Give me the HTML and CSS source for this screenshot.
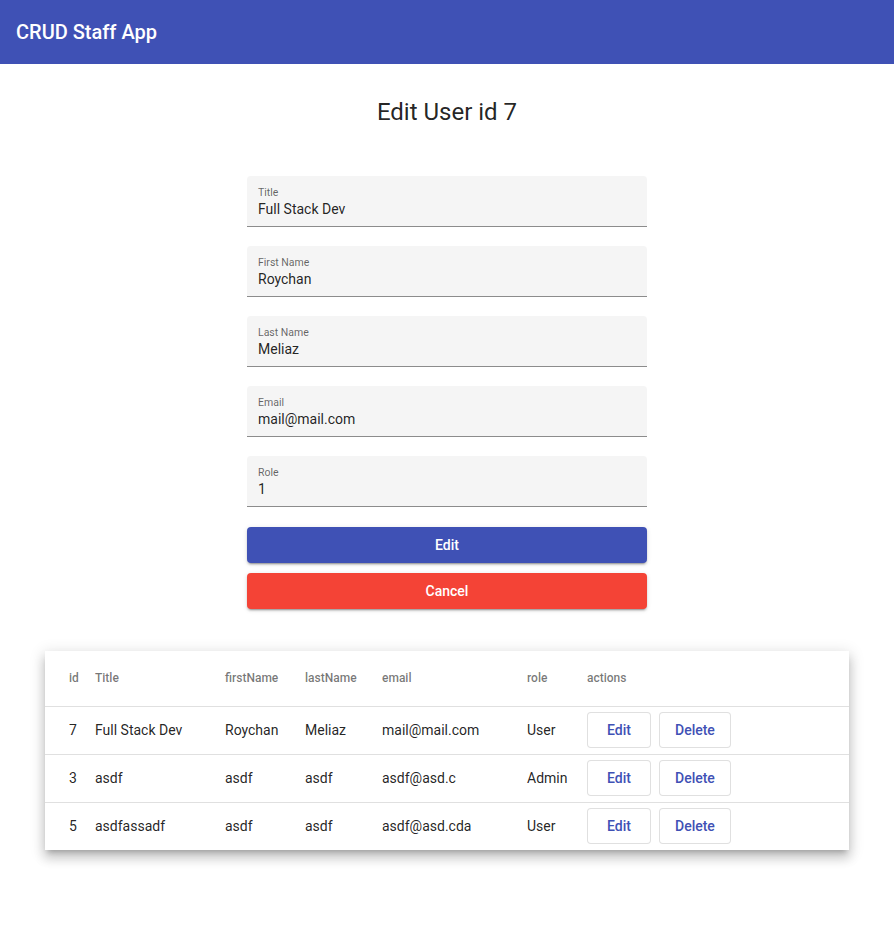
FILE: index.html
```html
<!DOCTYPE html>
<html>
<head>
<meta charset="utf-8">
<link rel="stylesheet" href="styles.css">
</head>
<body>
<header class="toolbar"><span class="brand">CRUD Staff App</span></header>
<main class="page">
  <h2 class="heading">Edit User id 7</h2>
  <form class="form">
    <div class="field"><label class="label">Title</label><div class="value">Full Stack Dev</div></div>
    <div class="field"><label class="label">First Name</label><div class="value">Roychan</div></div>
    <div class="field"><label class="label">Last Name</label><div class="value">Meliaz</div></div>
    <div class="field"><label class="label">Email</label><div class="value">mail@mail.com</div></div>
    <div class="field"><label class="label">Role</label><div class="value">1</div></div>
    <div class="buttons">
      <button type="button" class="btn btn-primary">Edit</button>
      <button type="button" class="btn btn-warn">Cancel</button>
    </div>
  </form>
  <div class="card">
    <table class="table">
      <colgroup>
        <col class="c-id"><col class="c-title"><col class="c-first"><col class="c-last"><col class="c-email"><col class="c-role"><col class="c-actions">
      </colgroup>
      <thead>
        <tr><th>id</th><th>Title</th><th>firstName</th><th>lastName</th><th>email</th><th>role</th><th>actions</th></tr>
      </thead>
      <tbody>
        <tr><td>7</td><td>Full Stack Dev</td><td>Roychan</td><td>Meliaz</td><td>mail@mail.com</td><td>User</td><td><div class="actions"><button class="sbtn">Edit</button><button class="sbtn">Delete</button></div></td></tr>
        <tr><td>3</td><td>asdf</td><td>asdf</td><td>asdf</td><td>asdf@asd.c</td><td>Admin</td><td><div class="actions"><button class="sbtn">Edit</button><button class="sbtn">Delete</button></div></td></tr>
        <tr><td>5</td><td>asdfassadf</td><td>asdf</td><td>asdf</td><td>asdf@asd.cda</td><td>User</td><td><div class="actions"><button class="sbtn">Edit</button><button class="sbtn">Delete</button></div></td></tr>
      </tbody>
    </table>
  </div>
</main>
</body>
</html>
```
FILE: styles.css
```css
* { box-sizing: border-box; }
html, body { margin: 0; padding: 0; background: #fff; }
body { font-family: Roboto, "Helvetica Neue", sans-serif; color: rgba(0,0,0,.87); }

.toolbar {
  height: 64px;
  background: #3f51b5;
  color: #fff;
  display: flex;
  align-items: center;
  padding: 0 16px;
}
.brand { font-size: 20px; font-weight: 500; letter-spacing: 0; }

.page {
  display: flex;
  flex-direction: column;
  align-items: center;
  padding-bottom: 90px;
}

.heading {
  margin: 32px 0 48px;
  font-size: 24px;
  line-height: 32px;
  font-weight: 400;
  color: rgba(0,0,0,.87);
}

.form { width: 400px; display: flex; flex-direction: column; gap: 19px; }

.field {
  background: #f5f5f5;
  border-radius: 4px 4px 0 0;
  border-bottom: 1px solid #8c8c8c;
  padding: 10px 11px 8px;
  display: flex;
  flex-direction: column;
}
.label { font-size: 10.5px; line-height: 14px; color: rgba(0,0,0,.6); }
.value { font-size: 14px; line-height: 18px; color: rgba(0,0,0,.87); }

.buttons { display: flex; flex-direction: column; gap: 10px; margin-top: 1px; }
.btn {
  height: 36px;
  border: none;
  border-radius: 4px;
  color: #fff;
  font-family: inherit;
  font-size: 14px;
  font-weight: 500;
  box-shadow: 0 3px 1px -2px rgba(0,0,0,.2), 0 2px 2px 0 rgba(0,0,0,.14), 0 1px 5px 0 rgba(0,0,0,.12);
}
.btn-primary { background: #3f51b5; }
.btn-warn { background: #f44336; }

.card {
  margin-top: 42px;
  width: 804px;
  background: #fff;
  box-shadow: 0 5px 5px -3px rgba(0,0,0,.2), 0 8px 10px 1px rgba(0,0,0,.14), 0 3px 14px 2px rgba(0,0,0,.12);
}
.table { width: 100%; border-collapse: collapse; table-layout: fixed; }
.c-id { width: 50px; }
.c-title { width: 130px; }
.c-first { width: 80px; }
.c-last { width: 77px; }
.c-email { width: 145px; }
.c-role { width: 60px; }
.c-actions { width: 262px; }

.table th, .table td {
  padding: 0;
  text-align: left;
  border-bottom: 1px solid rgba(0,0,0,.12);
}
.table th:first-child, .table td:first-child { padding-left: 24px; }
.table th:last-child, .table td:last-child { padding-right: 24px; }
.table tr:last-child td { border-bottom: none; }
.table th {
  height: 55px;
  font-size: 12px;
  font-weight: 500;
  color: rgba(0,0,0,.54);
}
.table td {
  height: 48px;
  font-size: 14px;
  color: rgba(0,0,0,.87);
}

.actions { display: flex; gap: 8px; }
.sbtn {
  height: 36px;
  min-width: 64px;
  padding: 0 15px;
  background: #fff;
  border: 1px solid rgba(0,0,0,.12);
  border-radius: 4px;
  color: #3f51b5;
  font-family: inherit;
  font-size: 14px;
  font-weight: 500;
}
```
